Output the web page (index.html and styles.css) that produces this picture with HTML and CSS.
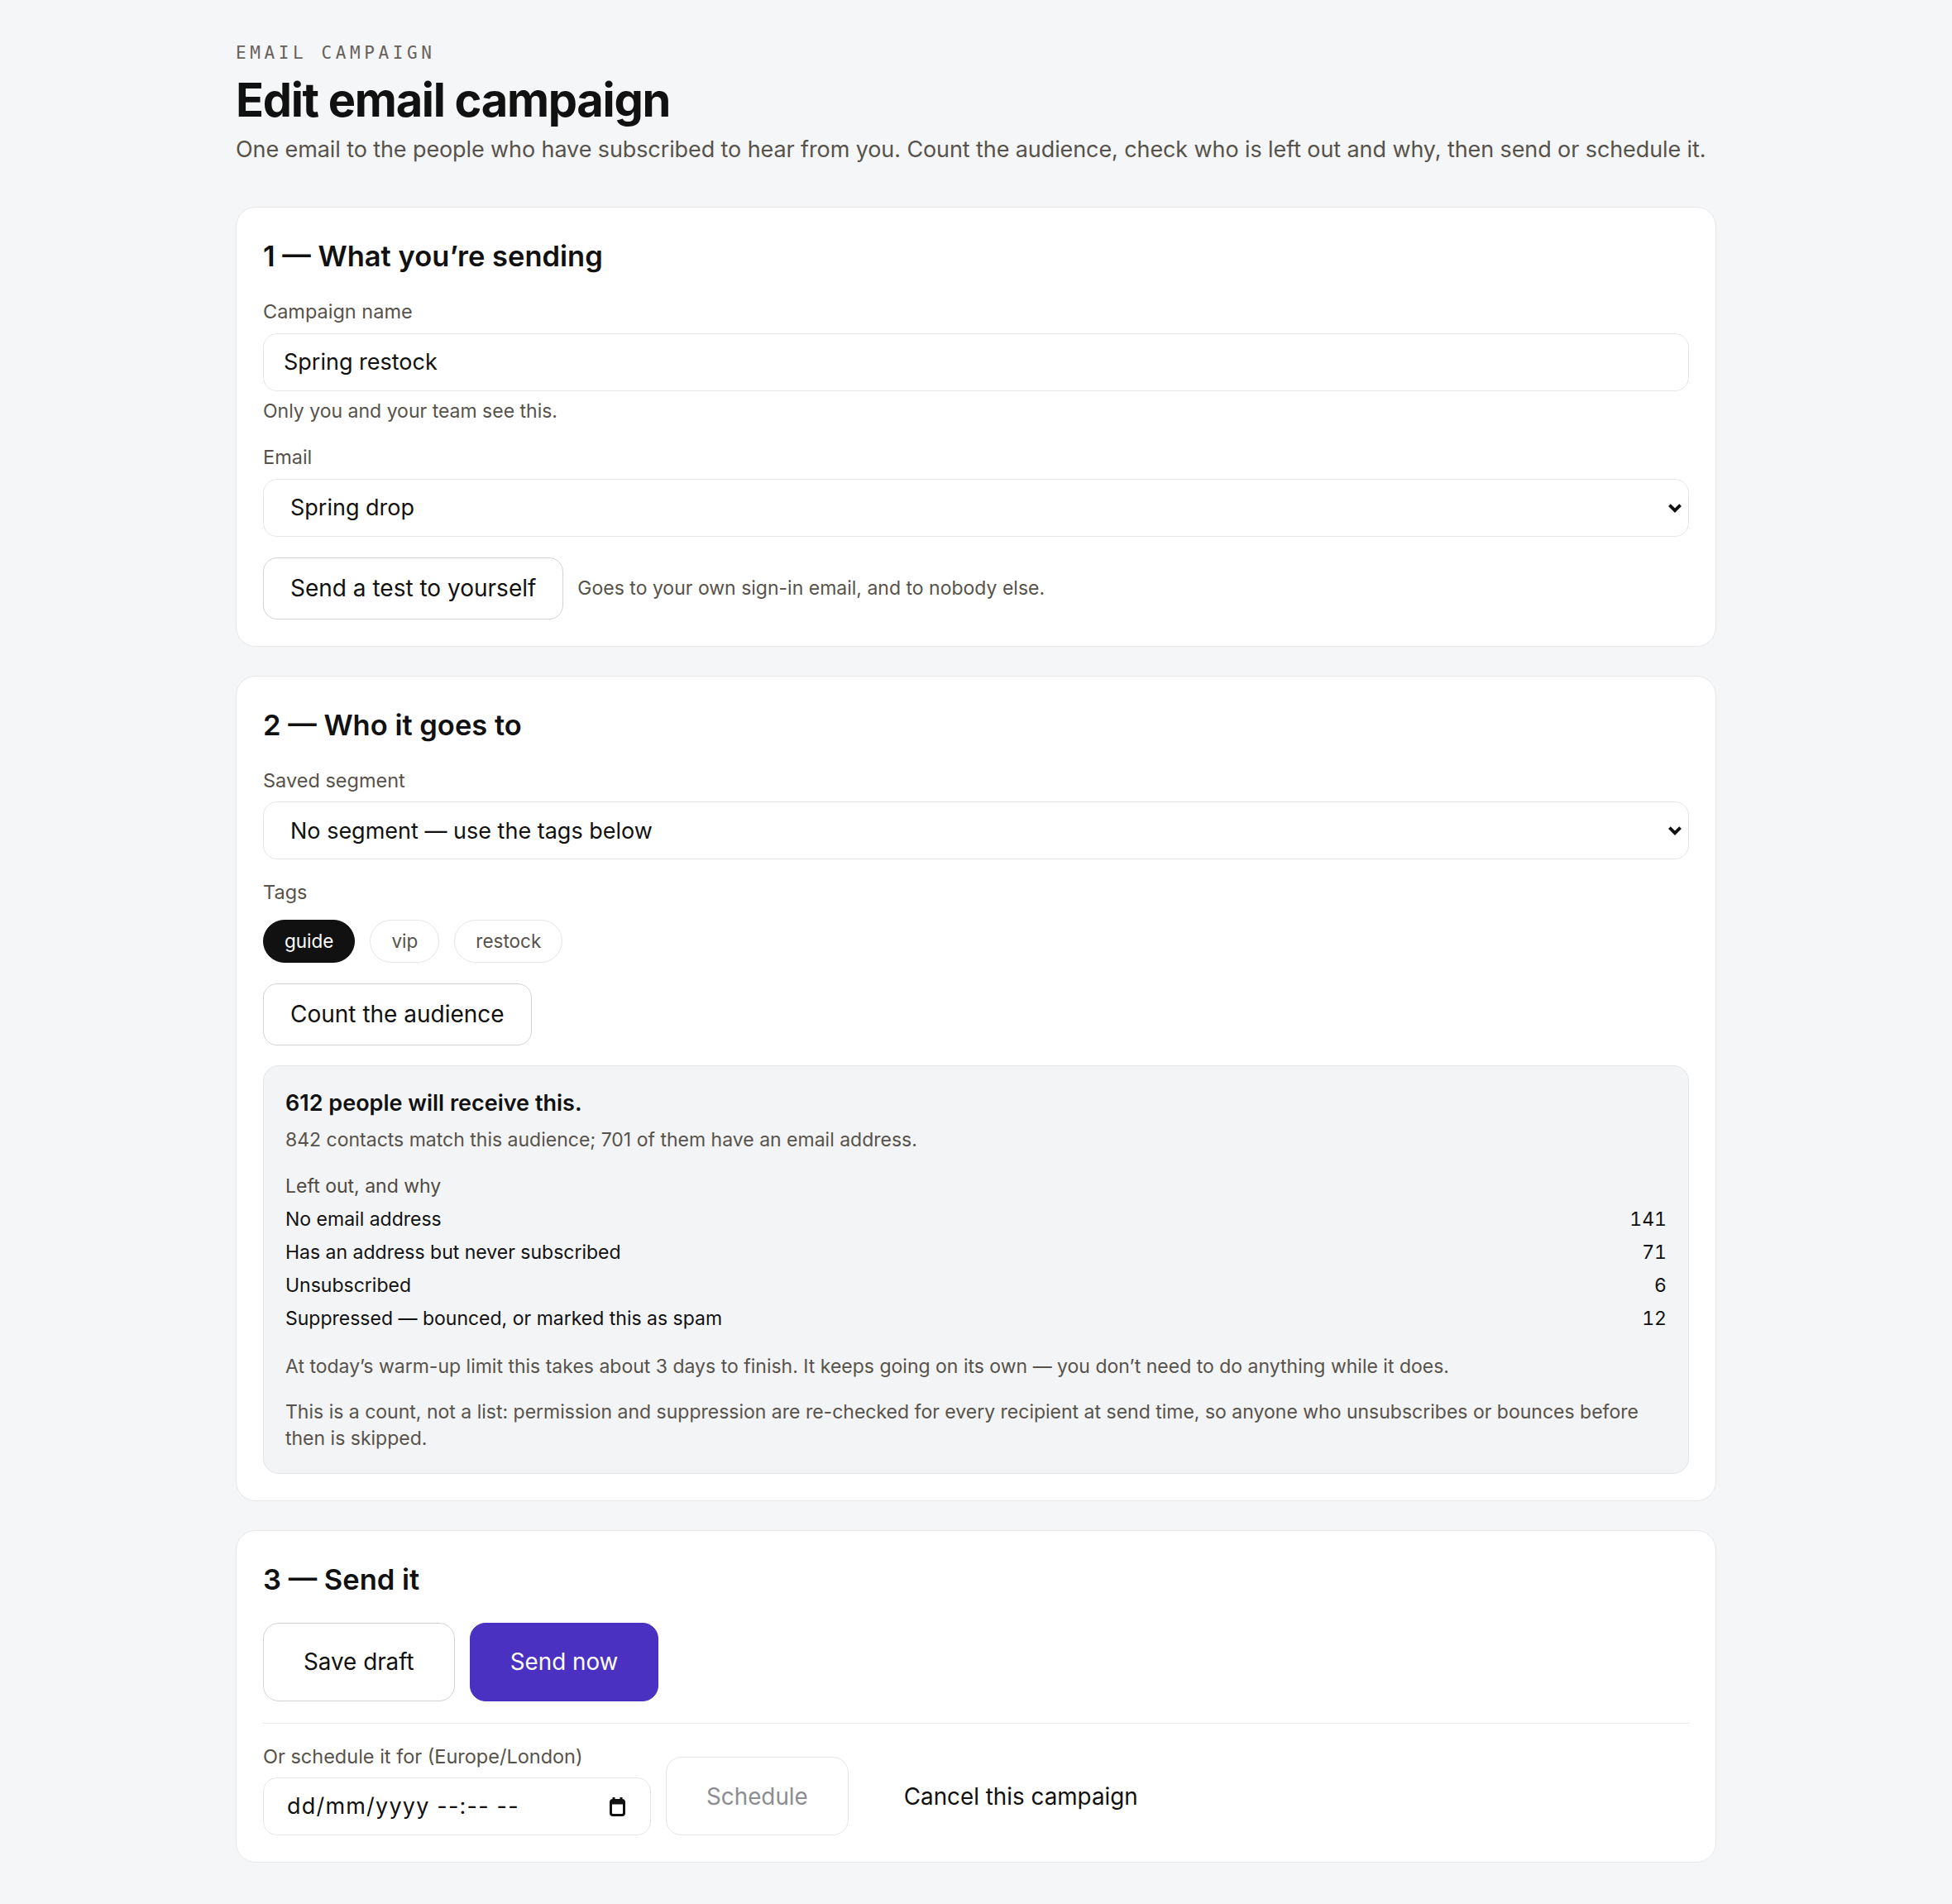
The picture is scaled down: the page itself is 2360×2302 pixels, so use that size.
FILE: index.html
```html
<!DOCTYPE html>
<html lang="en">
<head>
<meta charset="utf-8">
<title>Edit email campaign</title>
<link rel="stylesheet" href="styles.css">
</head>
<body>
<main class="page">
  <header class="page-head">
    <p class="eyebrow">EMAIL CAMPAIGN</p>
    <h1 class="title">Edit email campaign</h1>
    <p class="lede">One email to the people who have subscribed to hear from you. Count the audience, check who is left out and why, then send or schedule it.</p>
  </header>

  <div class="stack">
    <section class="card">
      <h2 class="card-title">1 — What you’re sending</h2>
      <div class="field">
        <label class="label" for="campaign-name">Campaign name</label>
        <input class="input" id="campaign-name" type="text" value="Spring restock">
        <p class="hint">Only you and your team see this.</p>
      </div>
      <div class="field">
        <label class="label" for="campaign-email">Email</label>
        <div class="select-wrap">
          <select class="input select" id="campaign-email">
            <option>Spring drop</option>
          </select>
          <svg class="chevron" width="18" height="12" viewBox="0 0 18 12" aria-hidden="true"><path d="M2.4 2.6 9 9.2 15.6 2.6" fill="none" stroke="#111" stroke-width="3.8"/></svg>
        </div>
      </div>
      <div class="inline">
        <button class="btn" type="button">Send a test to yourself</button>
        <span class="hint-inline">Goes to your own sign-in email, and to nobody else.</span>
      </div>
    </section>

    <section class="card">
      <h2 class="card-title">2 — Who it goes to</h2>
      <div class="field">
        <label class="label" for="segment">Saved segment</label>
        <div class="select-wrap">
          <select class="input select" id="segment">
            <option>No segment — use the tags below</option>
          </select>
          <svg class="chevron" width="18" height="12" viewBox="0 0 18 12" aria-hidden="true"><path d="M2.4 2.6 9 9.2 15.6 2.6" fill="none" stroke="#111" stroke-width="3.8"/></svg>
        </div>
      </div>
      <div class="field">
        <span class="label label-tags">Tags</span>
        <div class="chips">
          <button class="chip is-on" type="button">guide</button>
          <button class="chip" type="button">vip</button>
          <button class="chip" type="button">restock</button>
        </div>
      </div>
      <button class="btn" type="button">Count the audience</button>

      <div class="tally">
        <p class="tally-head">612 people will receive this.</p>
        <p class="tally-sub">842 contacts match this audience; 701 of them have an email address.</p>
        <div class="tally-list">
          <p class="tally-caption">Left out, and why</p>
          <div class="tally-row"><span>No email address</span><span class="num">141</span></div>
          <div class="tally-row"><span>Has an address but never subscribed</span><span class="num">71</span></div>
          <div class="tally-row"><span>Unsubscribed</span><span class="num">6</span></div>
          <div class="tally-row"><span>Suppressed — bounced, or marked this as spam</span><span class="num">12</span></div>
        </div>
        <p class="tally-note">At today’s warm-up limit this takes about 3 days to finish. It keeps going on its own — you don’t need to do anything while it does.</p>
        <p class="tally-note">This is a count, not a list: permission and suppression are re-checked for every recipient at send time, so anyone who unsubscribes or bounces before then is skipped.</p>
      </div>
    </section>

    <section class="card">
      <h2 class="card-title">3 — Send it</h2>
      <div class="actions">
        <button class="btn btn-lg" type="button">Save draft</button>
        <button class="btn btn-lg btn-primary" type="button">Send now</button>
      </div>
      <div class="schedule">
        <div class="date-field">
          <span class="label">Or schedule it for (Europe/London)</span>
          <div class="datetime">
            <span class="datetime-text">dd/mm/yyyy --:-- --</span>
            <svg class="calendar" width="19" height="23" viewBox="0 0 19 23" aria-hidden="true">
              <rect x="3.5" y="0" width="3" height="4" fill="#111"/>
              <rect x="12.5" y="0" width="3" height="4" fill="#111"/>
              <rect x="1.5" y="3.5" width="16" height="18" rx="2.5" fill="none" stroke="#111" stroke-width="3"/>
              <rect x="1.5" y="3.5" width="16" height="5" fill="#111"/>
            </svg>
          </div>
        </div>
        <button class="btn btn-lg btn-disabled" type="button">Schedule</button>
        <button class="btn btn-lg btn-ghost" type="button">Cancel this campaign</button>
      </div>
    </section>
  </div>
</main>
</body>
</html>
```

FILE: styles.css
```css
* {
  box-sizing: border-box;
}

html,
body {
  margin: 0;
}

body {
  background: #f5f6f8;
  color: #111;
  font-family: "Inter", "Noto Sans", "Liberation Sans", sans-serif;
  font-size: 23px;
  line-height: 30.8px;
}

p {
  margin: 0;
}

.page {
  width: 1790px;
  margin: 0 auto;
  padding: 50px 0;
}

/* Page heading */
.page-head {
  margin-bottom: 50px;
}

.eyebrow {
  margin-bottom: 12px;
  font-family: "DejaVu Sans Mono", "Liberation Mono", monospace;
  font-size: 21px;
  line-height: 29px;
  letter-spacing: 4.6px;
  color: #67615a;
}

.title {
  margin: 0;
  font-size: 56px;
  line-height: 61.6px;
  font-weight: 700;
  letter-spacing: -1.3px;
  color: #111;
}

.lede {
  margin-top: 8.5px;
  font-size: 27px;
  line-height: 39px;
  letter-spacing: -0.1px;
  color: #57524b;
}

/* Cards */
.stack {
  display: flex;
  flex-direction: column;
  gap: 35px;
}

.card {
  background: #fff;
  border: 1px solid #e8e8eb;
  border-radius: 24px;
  padding: 38px 32px 32px;
}

.card-title {
  margin: 0 0 32px;
  font-size: 34.5px;
  line-height: 41.25px;
  font-weight: 600;
  color: #111;
}

/* Form fields */
.field {
  margin-bottom: 25px;
}

.label {
  display: block;
  margin-bottom: 9.6px;
  font-size: 23.5px;
  color: #57524b;
}

.label-tags {
  margin-bottom: 17px;
}

.input {
  display: block;
  width: 100%;
  height: 70px;
  padding: 0 24px;
  border: 1px solid #e6e6e9;
  border-radius: 17px;
  background: #fff;
  font-family: inherit;
  font-size: 27px;
  color: #111;
  outline: none;
}

.select-wrap {
  position: relative;
}

.select {
  appearance: none;
  -webkit-appearance: none;
  padding-left: 32px;
  padding-right: 48px;
}

.chevron {
  position: absolute;
  right: 8px;
  top: 50%;
  margin-top: -6px;
  pointer-events: none;
}

.hint {
  margin-top: 9.6px;
  color: #57524b;
}

.inline {
  display: flex;
  align-items: center;
  gap: 17px;
}

.hint-inline {
  color: #57524b;
}

/* Buttons */
.btn {
  display: inline-block;
  padding: 20px 32px;
  border: 1px solid #d3d3d7;
  border-radius: 17px;
  background: #fff;
  font-family: inherit;
  font-size: 28px;
  line-height: 33px;
  color: #111;
  cursor: pointer;
}

.btn-lg {
  padding: 26.5px 48px;
  font-size: 27.8px;
  line-height: 40px;
  border-radius: 19px;
}

.btn-primary {
  background: #4a31c2;
  border-color: #4a31c2;
  color: #fff;
}

.btn-disabled {
  border-color: #e6e6e9;
  color: #8d8d91;
  cursor: default;
}

.btn-ghost {
  border-color: transparent;
  background: transparent;
}

/* Tag chips */
.chips {
  display: flex;
  gap: 18px;
}

.chip {
  padding: 10px 25px;
  border: 1px solid #e6e6e8;
  border-radius: 999px;
  background: #fff;
  font-family: inherit;
  font-size: 22.5px;
  line-height: 30px;
  color: #57524b;
  cursor: pointer;
}

.chip.is-on {
  background: #111;
  border-color: #111;
  color: #fff;
}

/* Audience count */
.tally {
  margin-top: 24px;
  padding: 28px 26px 26px;
  background: #f3f4f6;
  border: 1px solid #e3e4e8;
  border-radius: 19px;
}

.tally-head {
  font-size: 27px;
  line-height: 33.6px;
  font-weight: 600;
}

.tally-sub {
  margin-top: 12.5px;
  color: #57524b;
}

.tally-list {
  margin-top: 25px;
  display: flex;
  flex-direction: column;
  gap: 9.2px;
}

.tally-caption {
  color: #4f4a44;
}

.tally-row {
  display: flex;
  justify-content: space-between;
}

.num {
  font-variant-numeric: tabular-nums;
}

.tally-note {
  margin-top: 26px;
  line-height: 32px;
  color: #57524b;
}

.tally-note + .tally-note {
  margin-top: 23px;
}

/* Send controls */
.actions {
  display: flex;
  gap: 18px;
}

.schedule {
  display: flex;
  align-items: flex-end;
  gap: 18px;
  margin-top: 26px;
  padding-top: 25px;
  border-top: 1px solid #ebebee;
}

.date-field {
  width: 469px;
}

.datetime {
  display: flex;
  align-items: center;
  justify-content: space-between;
  height: 70px;
  padding: 0 30px 0 28px;
  border: 1px solid #e6e6e9;
  border-radius: 17px;
  background: #fff;
  font-size: 27px;
  color: #111;
}

.datetime-text {
  letter-spacing: 1.2px;
}
```
